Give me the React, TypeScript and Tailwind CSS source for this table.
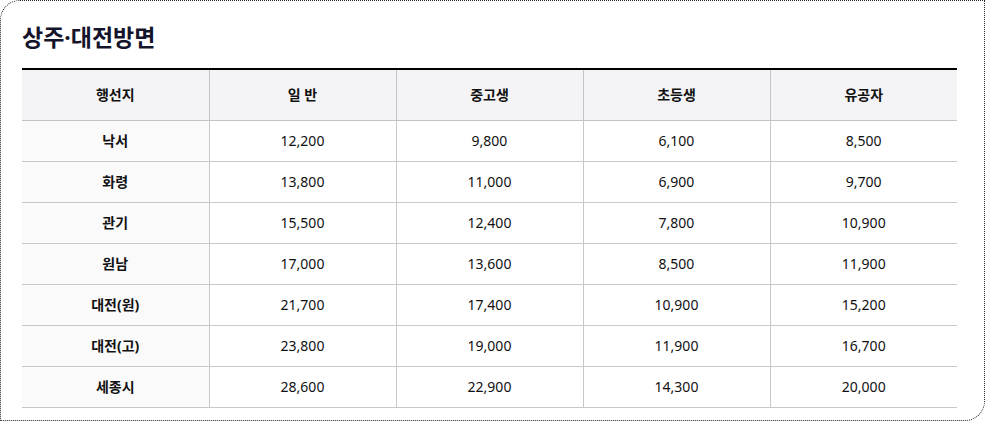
const rows = [
  ["낙서", "12,200", "9,800", "6,100", "8,500"],
  ["화령", "13,800", "11,000", "6,900", "9,700"],
  ["관기", "15,500", "12,400", "7,800", "10,900"],
  ["원남", "17,000", "13,600", "8,500", "11,900"],
  ["대전(원)", "21,700", "17,400", "10,900", "15,200"],
  ["대전(고)", "23,800", "19,000", "11,900", "16,700"],
  ["세종시", "28,600", "22,900", "14,300", "20,000"],
];

const heads = ["행선지", "일 반", "중고생", "초등생", "유공자"];

export default function App() {
  return (
    <div
      className="w-[985px] h-[421px] bg-white"
      style={{ fontFamily: '"Noto Sans", "Noto Sans CJK KR", sans-serif' }}
    >
      <div className="h-full border border-dotted border-[#222] rounded-tl-[20px] rounded-br-[20px] pl-[21px] pr-[26px] pt-[21px]">
        <h2 className="text-[23px] font-bold text-[#14142b] leading-[30px]">
          상주·대전방면
        </h2>
        <table className="mt-[16px] w-[935px] table-fixed border-collapse text-[14px] text-[#111]">
          <thead>
            <tr className="h-[51px] bg-[#f4f4f6] border-t-2 border-black">
              {heads.map((h, i) => (
                <th
                  key={h}
                  className={`font-bold border-b border-[#c4c4c4] ${i > 0 ? "border-l" : ""}`}
                >
                  {h}
                </th>
              ))}
            </tr>
          </thead>
          <tbody>
            {rows.map((r) => (
              <tr key={r[0]} className="h-[41px]">
                {r.map((c, i) => (
                  <td
                    key={i}
                    className={
                      i === 0
                        ? "text-center font-bold bg-[#fafafa] border-b border-[#c8c8c8]"
                        : "text-center border-b border-l border-[#c8c8c8]"
                    }
                  >
                    {c}
                  </td>
                ))}
              </tr>
            ))}
          </tbody>
        </table>
      </div>
    </div>
  );
}
